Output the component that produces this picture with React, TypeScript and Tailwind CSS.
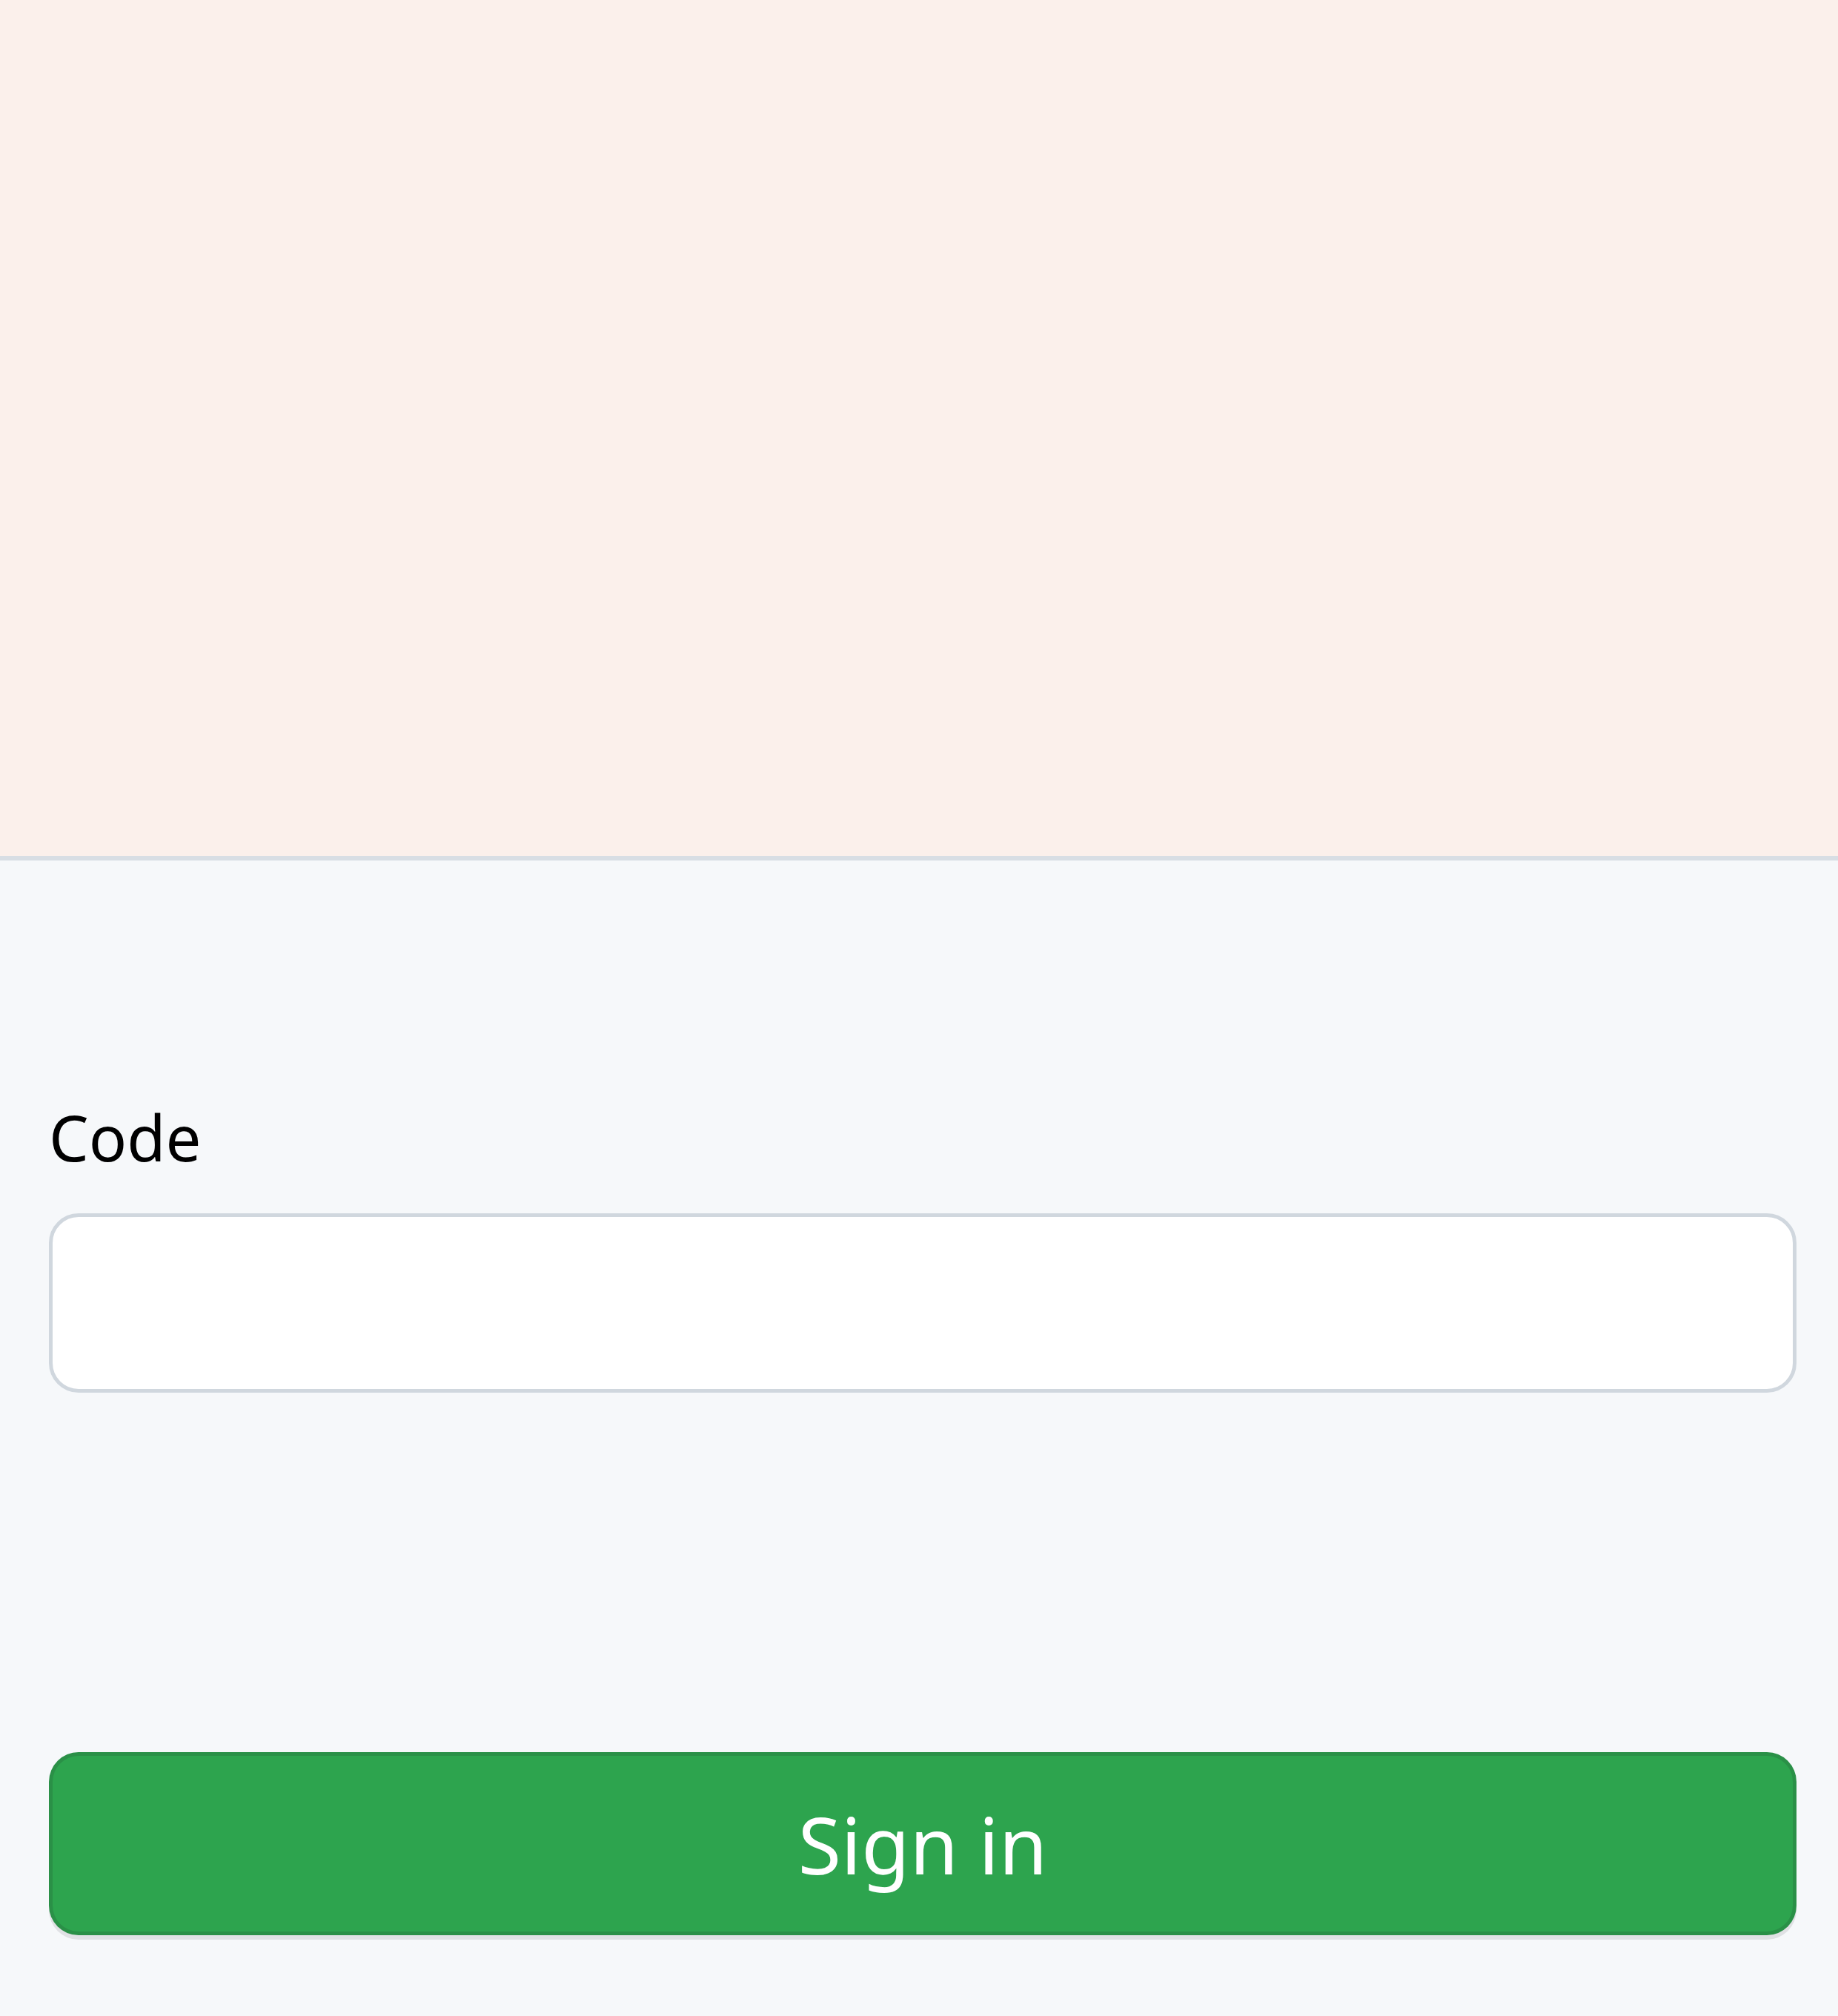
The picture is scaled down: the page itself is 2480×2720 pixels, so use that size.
import React from "react";

export default function App() {
  return (
    <div className="w-[2480px] h-[2720px] bg-[#f6f8fa] flex flex-col" style={{ fontFamily: '"Noto Sans", "Open Sans", sans-serif' }}>
      <div className="h-[1161px] shrink-0 bg-[#fbf0eb] border-b-[6px] border-[#d8dee4]" />
      <div className="pl-[66px] pr-[56px] flex flex-col">
        <label className="mt-[323px] block text-[85px] leading-[100px] text-black">Code</label>
        <input
          type="text"
          className="mt-[53px] h-[242px] w-full bg-white border-[5px] border-[#d0d7de] rounded-[40px] outline-none"
        />
        <button
          type="button"
          className="mt-[485px] h-[247px] w-full bg-[#2da44e] border-[5px] border-[rgba(27,31,36,0.15)] rounded-[40px] shadow-[0_6px_0_rgba(27,31,36,0.1)] text-white text-[106px] leading-none flex items-center justify-center"
        >
          Sign in
        </button>
      </div>
    </div>
  );
}
